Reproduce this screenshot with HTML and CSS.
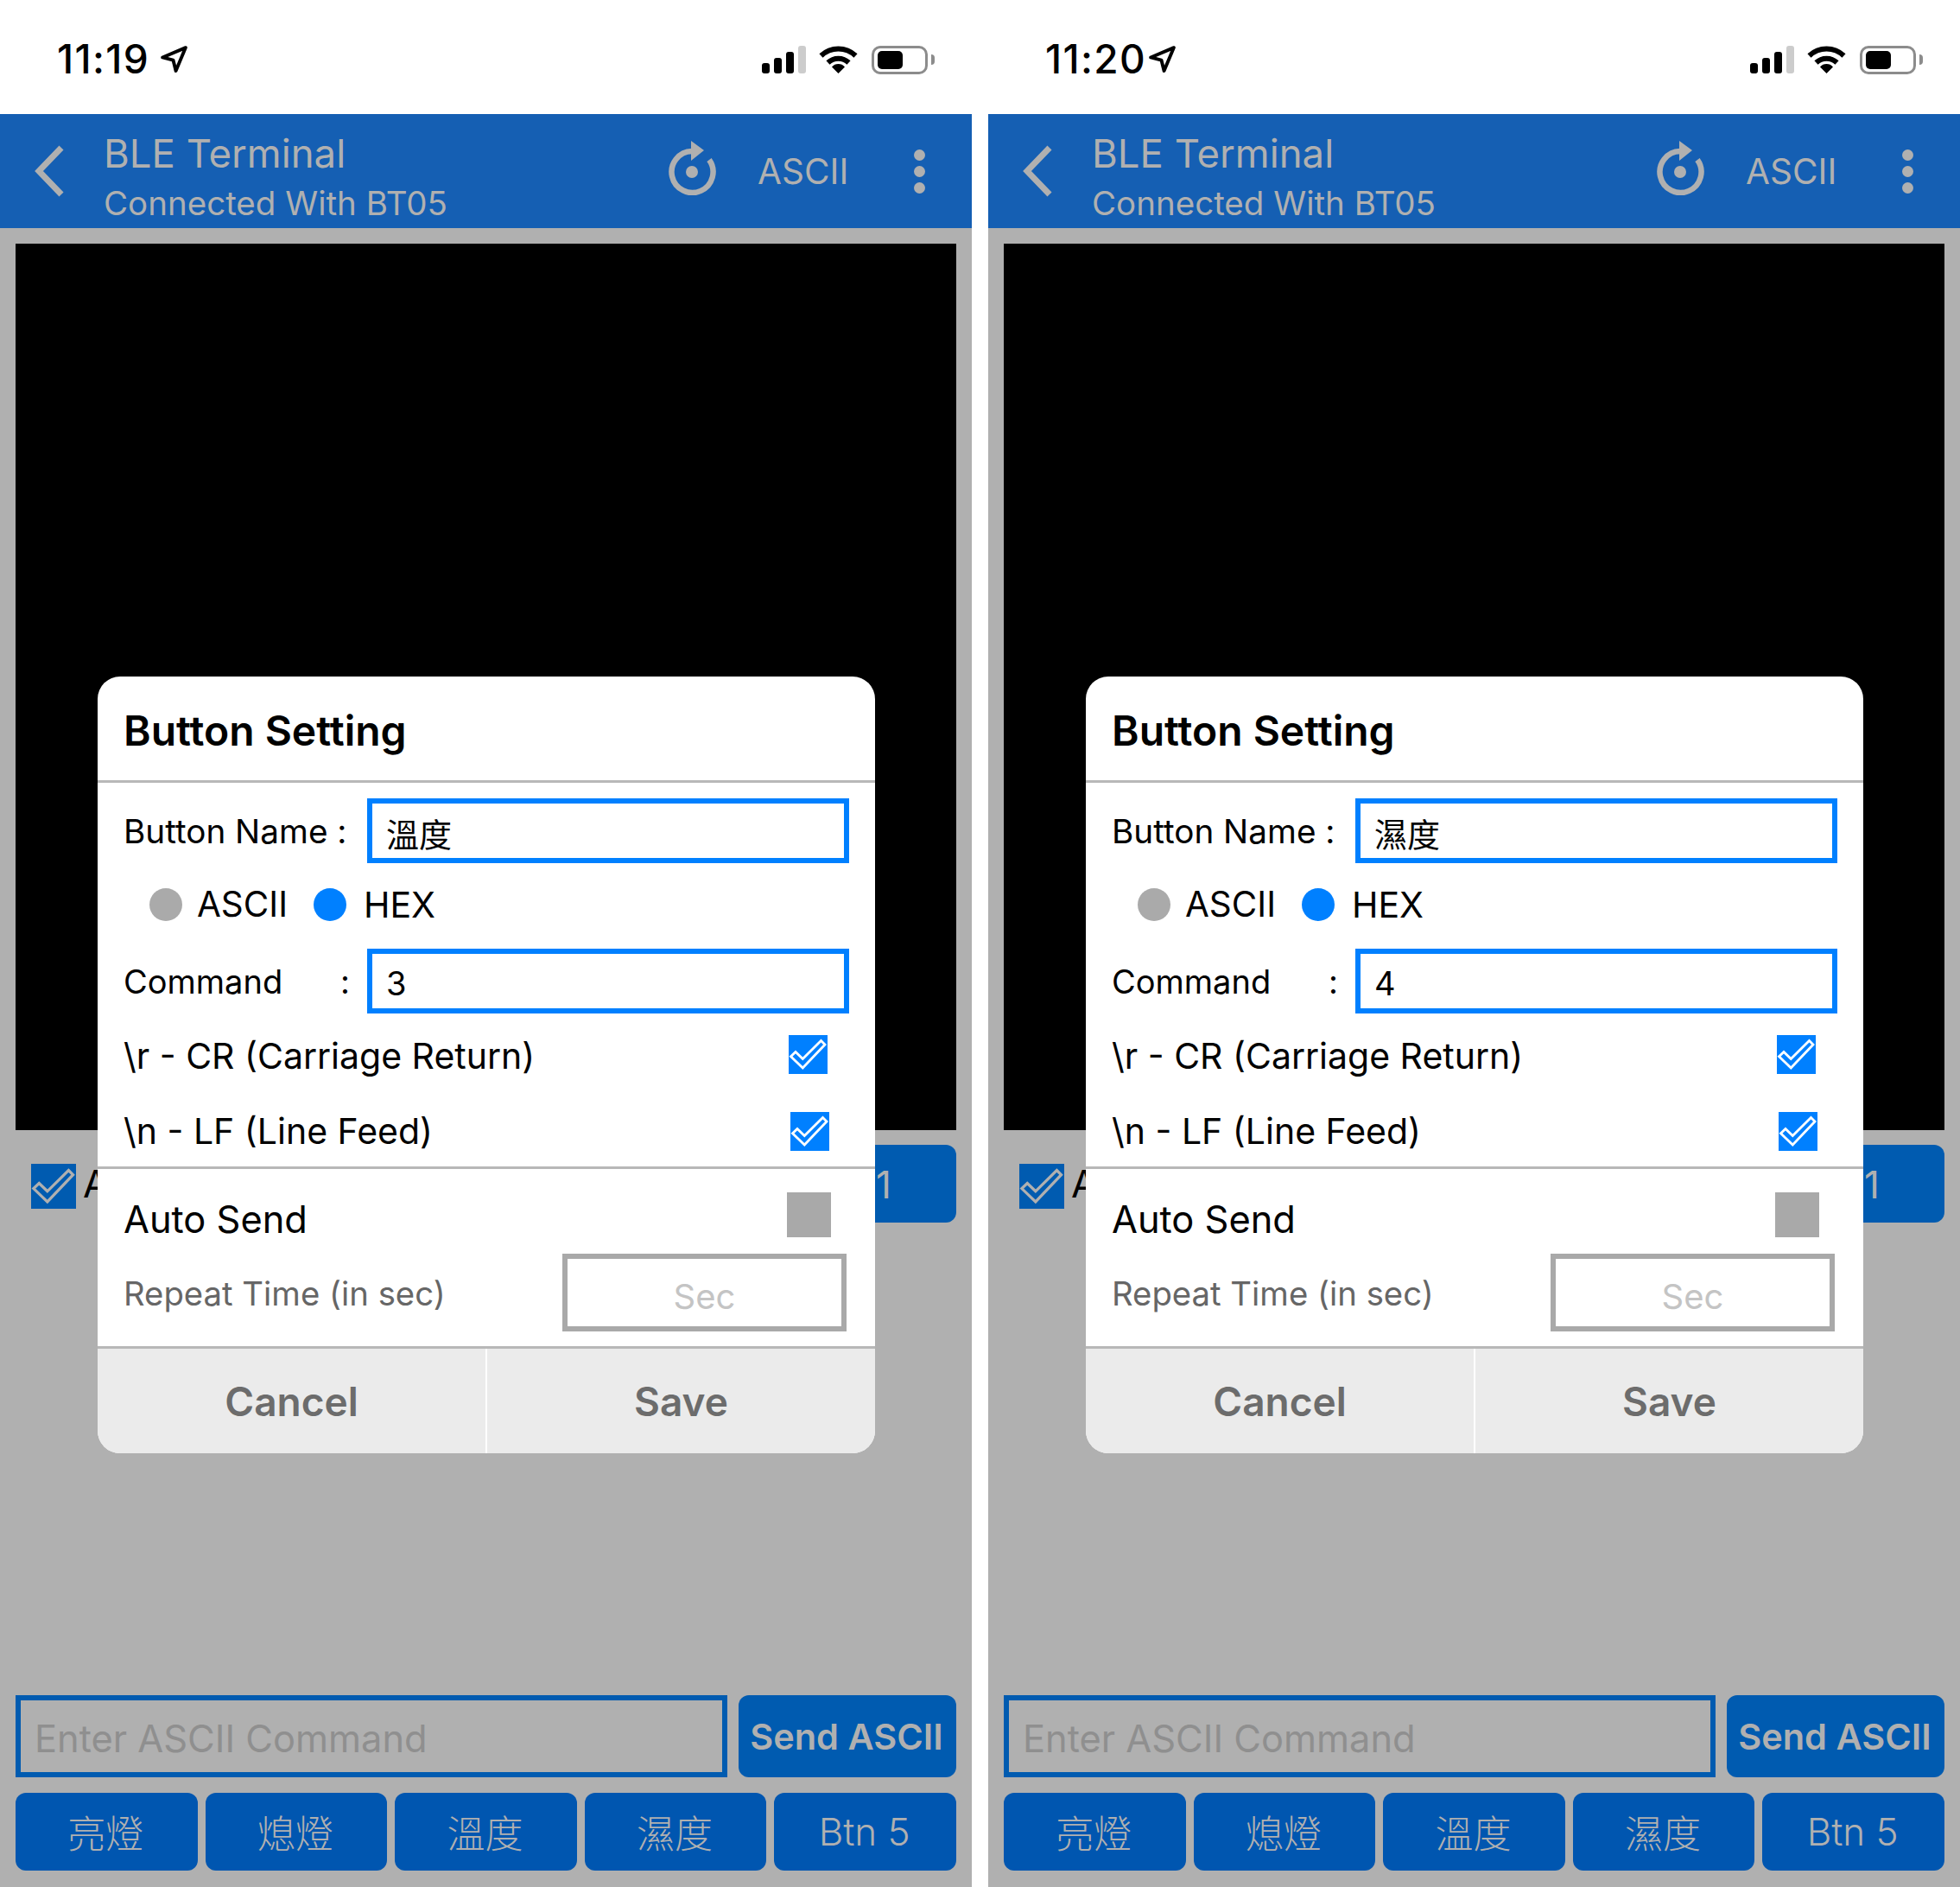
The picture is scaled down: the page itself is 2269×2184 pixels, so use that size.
FILE: index.html
```html
<!DOCTYPE html>
<html lang="zh-Hant">
<head>
<meta charset="utf-8">
<title>BLE Terminal</title>
<link rel="stylesheet" href="styles.css">
</head>
<body>
<div class="pair">
<section class="phone">
  <div class="status">
    <span class="time">11:19</span>
    <svg class="loc" viewBox="0 0 32 32"><polygon points="29,3 3,14 15,17 18,29"/></svg>
    <span class="status-right">
      <span class="signal"><i class="b1"></i><i class="b2"></i><i class="b3"></i><i class="b4"></i></span>
      <svg class="wifi" viewBox="0 0 45 32"><path class="arc" d="M2.5 11.5A29 29 0 0 1 42.5 11.5"/><path class="arc" d="M10.5 19.5A17.5 17.5 0 0 1 34.5 19.5"/><path class="wedge" d="M22.5 32L15 24.5A10 10 0 0 1 30 24.5Z"/></svg>
      <span class="battery"><i></i></span><span class="nub"></span>
    </span>
  </div>
  <header class="bar">
    <svg class="back" viewBox="0 0 36 60"><polyline points="32,3 6,30 32,57"/></svg>
    <div class="titles"><div class="title">BLE Terminal</div><div class="sub">Connected With BT05</div></div>
    <svg class="refresh" viewBox="0 0 56 64"><path class="ring" d="M27 13A24 24 0 1 0 47 23"/><polygon points="26,1 41,12 26,24"/><circle cx="27" cy="37" r="7"/></svg>
    <span class="mode">ASCII</span>
    <span class="dots"><i></i><i></i><i></i></span>
  </header>
  <main class="content">
    <div class="terminal"></div>
    <div class="auto-row">
      <svg class="check dim" viewBox="0 0 45 45"><rect width="45" height="45"/><polygon points="37.5,6.5 42,11 16.3,38 2.5,24.7 8,19.5 16.3,27.5"/></svg>
      <span class="auto-label">Auto Send</span>
      <span class="timer">Timer 1</span>
    </div>
    <div class="bottom">
      <div class="send-row">
        <div class="cmd">Enter ASCII Command</div>
        <div class="send">Send ASCII</div>
      </div>
      <div class="btns">
        <div class="btn">亮燈</div><div class="btn">熄燈</div><div class="btn">溫度</div><div class="btn">濕度</div><div class="btn">Btn 5</div>
      </div>
    </div>
  </main>
  <div class="modal">
    <div class="m-title">Button Setting</div>
    <div class="m-body">
      <div class="row-input"><span class="lab">Button Name :</span><div class="field cjk">溫度</div></div>
      <div class="radios"><i class="radio"></i><span class="r-lab r1">ASCII</span><i class="radio on"></i><span class="r-lab r2">HEX</span></div>
      <div class="row-input"><span class="lab lab-cmd"><span>Command</span><span>:</span></span><div class="field">3</div></div>
      <div class="row-check cr"><span>\r - CR (Carriage Return)</span><svg class="check" viewBox="0 0 45 45"><rect width="45" height="45"/><polygon points="37.5,6.5 42,11 16.3,38 2.5,24.7 8,19.5 16.3,27.5"/></svg></div>
      <div class="row-check lf"><span>\n - LF (Line Feed)</span><svg class="check" viewBox="0 0 45 45"><rect width="45" height="45"/><polygon points="37.5,6.5 42,11 16.3,38 2.5,24.7 8,19.5 16.3,27.5"/></svg></div>
    </div>
    <div class="m-auto">
      <div class="auto-line"><span>Auto Send</span><i class="off"></i></div>
      <div class="repeat"><span>Repeat Time (in sec)</span><div class="sec">Sec</div></div>
    </div>
    <div class="m-foot"><div>Cancel</div><div>Save</div></div>
  </div>
</section>

<section class="phone">
  <div class="status">
    <span class="time">11:20</span>
    <svg class="loc" viewBox="0 0 32 32"><polygon points="29,3 3,14 15,17 18,29"/></svg>
    <span class="status-right">
      <span class="signal"><i class="b1"></i><i class="b2"></i><i class="b3"></i><i class="b4"></i></span>
      <svg class="wifi" viewBox="0 0 45 32"><path class="arc" d="M2.5 11.5A29 29 0 0 1 42.5 11.5"/><path class="arc" d="M10.5 19.5A17.5 17.5 0 0 1 34.5 19.5"/><path class="wedge" d="M22.5 32L15 24.5A10 10 0 0 1 30 24.5Z"/></svg>
      <span class="battery"><i></i></span><span class="nub"></span>
    </span>
  </div>
  <header class="bar">
    <svg class="back" viewBox="0 0 36 60"><polyline points="32,3 6,30 32,57"/></svg>
    <div class="titles"><div class="title">BLE Terminal</div><div class="sub">Connected With BT05</div></div>
    <svg class="refresh" viewBox="0 0 56 64"><path class="ring" d="M27 13A24 24 0 1 0 47 23"/><polygon points="26,1 41,12 26,24"/><circle cx="27" cy="37" r="7"/></svg>
    <span class="mode">ASCII</span>
    <span class="dots"><i></i><i></i><i></i></span>
  </header>
  <main class="content">
    <div class="terminal"></div>
    <div class="auto-row">
      <svg class="check dim" viewBox="0 0 45 45"><rect width="45" height="45"/><polygon points="37.5,6.5 42,11 16.3,38 2.5,24.7 8,19.5 16.3,27.5"/></svg>
      <span class="auto-label">Auto Send</span>
      <span class="timer">Timer 1</span>
    </div>
    <div class="bottom">
      <div class="send-row">
        <div class="cmd">Enter ASCII Command</div>
        <div class="send">Send ASCII</div>
      </div>
      <div class="btns">
        <div class="btn">亮燈</div><div class="btn">熄燈</div><div class="btn">溫度</div><div class="btn">濕度</div><div class="btn">Btn 5</div>
      </div>
    </div>
  </main>
  <div class="modal">
    <div class="m-title">Button Setting</div>
    <div class="m-body">
      <div class="row-input"><span class="lab">Button Name :</span><div class="field cjk">濕度</div></div>
      <div class="radios"><i class="radio"></i><span class="r-lab r1">ASCII</span><i class="radio on"></i><span class="r-lab r2">HEX</span></div>
      <div class="row-input"><span class="lab lab-cmd"><span>Command</span><span>:</span></span><div class="field">4</div></div>
      <div class="row-check cr"><span>\r - CR (Carriage Return)</span><svg class="check" viewBox="0 0 45 45"><rect width="45" height="45"/><polygon points="37.5,6.5 42,11 16.3,38 2.5,24.7 8,19.5 16.3,27.5"/></svg></div>
      <div class="row-check lf"><span>\n - LF (Line Feed)</span><svg class="check" viewBox="0 0 45 45"><rect width="45" height="45"/><polygon points="37.5,6.5 42,11 16.3,38 2.5,24.7 8,19.5 16.3,27.5"/></svg></div>
    </div>
    <div class="m-auto">
      <div class="auto-line"><span>Auto Send</span><i class="off"></i></div>
      <div class="repeat"><span>Repeat Time (in sec)</span><div class="sec">Sec</div></div>
    </div>
    <div class="m-foot"><div>Cancel</div><div>Save</div></div>
  </div>
</section>
</div>
</body>
</html>
```

FILE: styles.css
```css
* { box-sizing: border-box; }
html, body { margin: 0; padding: 0; background: #fff; }
body { font-family: Inter, "Noto Sans CJK TC", sans-serif; }
i { display: block; font-style: normal; }
.pair { display: flex; gap: 19px; width: 2269px; height: 2184px; }
.phone { position: relative; width: 1125px; height: 2184px; display: flex; flex-direction: column; background: #b0b0b0; flex: none; }

/* status bar */
.status { height: 132px; background: #fff; display: flex; align-items: flex-start; padding: 44px 0 0 66px; flex: none; }
.time { font-size: 46px; line-height: 48px; font-weight: 500; color: #000; letter-spacing: 1.4px; width: 119px; white-space: nowrap; }
.loc { width: 33px; height: 33px; margin-top: 8px; }
.loc polygon { fill: none; stroke: #000; stroke-width: 3.8; stroke-linejoin: round; }
.status-right { margin-left: auto; display: flex; align-items: flex-start; padding: 9px 43px 0 0; }
.signal { display: flex; align-items: flex-end; gap: 5px; height: 32px; margin-right: 15px; }
.signal i { width: 9px; background: #000; border-radius: 3px; }
.b1 { height: 12px; } .b2 { height: 18px; } .b3 { height: 25px; }
.signal .b4 { height: 32px; background: #ccc; }
.wifi { width: 45px; height: 32px; margin-right: 16px; }
.arc { fill: none; stroke: #000; stroke-width: 6; }
.wedge { fill: #000; }
.battery { width: 65px; height: 33px; border: 3px solid #8c8c8c; border-radius: 10px; padding: 3px 4px; }
.battery i { width: 29px; height: 21px; background: #000; border-radius: 5px; }
.nub { width: 4px; height: 12px; background: #8c8c8c; margin: 10px 0 0 4px; border-radius: 0 4px 4px 0; }

/* app bar */
.bar { height: 132px; background: #155fb3; color: #b0b0b0; display: flex; align-items: center; flex: none; position: relative; }
.back { width: 36px; height: 60px; margin-left: 39px; flex: none; }
.back polyline { fill: none; stroke: #b0b0b0; stroke-width: 7; }
.titles { margin-left: 45px; display: flex; flex-direction: column; width: 695px; padding-top: 12px; }
.title { font-size: 45.5px; line-height: 58px; }
.sub { font-size: 38.5px; line-height: 50px; margin-top: 3px; }
.refresh { width: 56px; height: 64px; margin-left: -41px; flex: none; margin-top: -8px; }
.refresh .ring { fill: none; stroke: #b0b0b0; stroke-width: 6.5; }
.refresh polygon, .refresh circle { fill: #b0b0b0; }
.mode { font-size: 40.5px; margin-left: 47px; width: 181px; }
.dots { display: flex; flex-direction: column; gap: 6px; }
.dots i { width: 13px; height: 13px; border-radius: 50%; background: #b0b0b0; }

/* content */
.content { flex: 1; display: flex; flex-direction: column; padding: 18px 18px 19px; }
.terminal { height: 1026px; background: #000; flex: none; }
.auto-row { display: flex; align-items: center; height: 90px; margin-top: 17px; padding-left: 18px; }
.auto-label { font-size: 44px; color: #000; margin-left: 8px; }
.timer { margin-left: auto; width: 400px; height: 90px; background: #005bb0; border-radius: 12px; color: #b0b0b0; font-size: 44px; font-weight: 400; display: flex; align-items: center; justify-content: flex-end; padding: 2px 75px 0 0; }
.check { display: block; width: 45px; height: 45px; flex: none; }
.check rect { fill: #0080ff; }
.check polygon { fill: none; stroke: #fff; stroke-width: 2.8; }
.check.dim { width: 52px; height: 52px; margin-top: 5px; }
.check.dim rect { fill: #005bb0; }
.check.dim polygon { stroke: #b0b0b0; }
.bottom { margin-top: auto; display: flex; flex-direction: column; gap: 18px; }
.send-row { display: flex; gap: 13px; height: 95px; }
.cmd { flex: 1; border: 6px solid #005bb0; color: #8f8f8f; font-size: 43.4px; display: flex; align-items: center; padding: 4px 0 0 16px; }
.send { width: 252px; background: #005bb0; border-radius: 12px; color: #b0b0b0; font-size: 41.5px; font-weight: 600; display: flex; align-items: center; justify-content: center; white-space: nowrap; padding-right: 2px; }
.btns { display: flex; gap: 9px; height: 90px; }
.btn { flex: 1; background: #0056b0; border-radius: 12px; color: #b0b0b0; font-size: 44px; display: flex; align-items: center; justify-content: center; font-weight: 300; padding-right: 2px; }

/* modal */
.modal { position: absolute; left: 113px; top: 783px; width: 900px; height: 899px; background: #fff; border-radius: 26px; overflow: hidden; display: flex; flex-direction: column; color: #000; }
.m-title { height: 123px; border-bottom: 3px solid #b8b8b8; font-size: 48px; font-weight: 600; display: flex; align-items: center; padding: 5px 0 0 30px; flex: none; }
.m-body { padding: 18px 30px 0 30px; height: 447px; border-bottom: 3px solid #b8b8b8; flex: none; }
.row-input { display: flex; align-items: center; font-size: 38.7px; }
.lab { width: 282px; padding-right: 18px; display: flex; justify-content: space-between; white-space: nowrap; }
.lab-cmd { font-size: 38px; padding-right: 20px; }
.field { flex: 1; height: 75px; border: 6px solid #0080ff; font-size: 38px; display: flex; align-items: center; padding: 4px 0 0 16px; }
.radios { height: 99px; display: flex; align-items: center; padding: 0 0 4px 30px; }
.radio { width: 38px; height: 38px; border-radius: 50%; background: #aaa; flex: none; }
.radio.on { background: #0080ff; }
.r-lab { margin-left: 17px; font-size: 40.4px; }
.r1 { width: 135px; }
.r2 { margin-left: 20px; font-size: 41px; }
.row-check { display: flex; justify-content: space-between; align-items: center; font-size: 41px; }
.cr { height: 94px; padding-right: 25px; }
.cr span { padding-top: 3px; }
.lf { height: 84px; padding-right: 23px; }
.m-auto { padding: 0 33px 0 30px; height: 208px; border-bottom: 3px solid #b8b8b8; flex: none; }
.auto-line { height: 98px; display: flex; justify-content: space-between; align-items: center; font-size: 43.4px; padding-right: 18px; }
.auto-line span { padding-top: 18px; }
.off { width: 51px; height: 52px; background: #a9a9a9; margin-top: 7px; }
.repeat { display: flex; justify-content: space-between; align-items: center; font-size: 38.3px; color: #666; }
.repeat span { padding-top: 1px; }
.sec { width: 329px; height: 90px; border: 6px solid #a9a9a9; color: #c4c4c4; font-size: 40px; display: flex; align-items: center; justify-content: center; padding-top: 8px; }
.m-foot { flex: 1; display: flex; background: #ebebeb; font-size: 46px; font-weight: 600; color: #6c6c6c; }
.m-foot div { flex: 1; display: flex; align-items: center; justify-content: center; }
.m-foot div + div { border-left: 2px solid #fff; }
```
